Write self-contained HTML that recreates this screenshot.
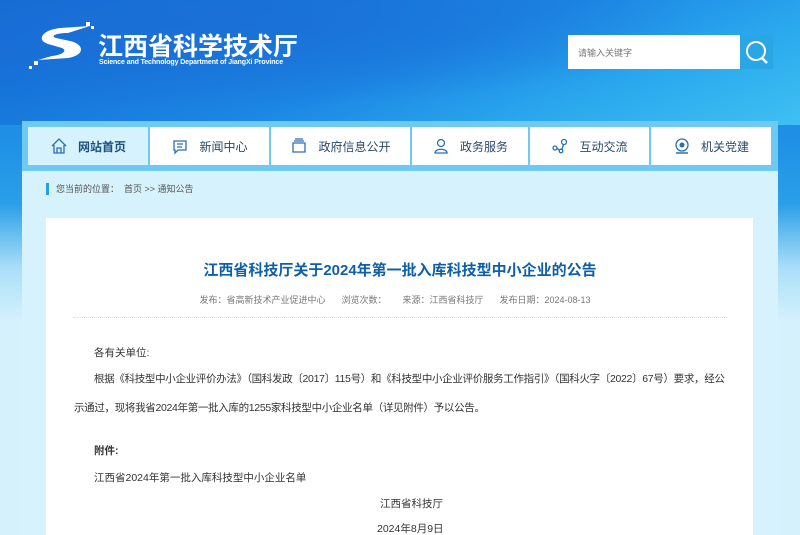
<!DOCTYPE html>
<html><head><meta charset="utf-8"><style>
*{margin:0;padding:0;box-sizing:border-box}
html,body{width:800px;height:535px;overflow:hidden}
body{position:relative;font-family:"Liberation Sans","Noto Sans CJK SC",sans-serif;background:linear-gradient(180deg,#1a78d8 0%,#1f8fe6 25%,#2a9fe8 38%,#a9def8 50%,#d5f1fc 60%,#d5f1fc 100%)}
.hdr{position:absolute;left:0;top:0;width:800px;height:125px;background:radial-gradient(ellipse at 20% 20%,#1a6fd6 0%,transparent 60%),linear-gradient(160deg,#1267d2 0%,#1c86e4 50%,#2aa8ee 75%,#3fc0f2 100%)}
.logo{position:absolute;left:98px;top:27px;color:#fff;font-size:25px;font-weight:bold;letter-spacing:0}
.en{position:absolute;left:99px;top:59px;color:#fff;font-size:7px;font-weight:bold;letter-spacing:-0.1px}
.search{position:absolute;left:568px;top:35px;width:172px;height:34px;background:#fff;font-size:9px;color:#777;padding:11px 0 0 10px}
.sbtn{position:absolute;left:740px;top:35px;width:33px;height:34px;background:#2aa6e4}
.panel{position:absolute;left:22px;top:121px;width:756px;height:420px;background:#d6f2fc}
.navbg{position:absolute;left:22px;top:121px;width:756px;height:50px;background:#6fcaf3}
.nav{position:absolute;left:28px;top:127px;height:38px;display:flex;gap:2px}
.nav div{background:#fff;display:flex;align-items:center;justify-content:center;font-size:12px;color:#2a4a6a;gap:10px}
.nav div.on{background:#d6f2fc;font-weight:bold;color:#1b4f82}
.nav svg{width:18px;height:18px}
.bc{position:absolute;left:46px;top:183px;font-size:9px;color:#555;border-left:3px solid #2a9fe0;padding-left:7px;height:12px;line-height:12px}
.card{position:absolute;left:46px;top:218px;width:707px;height:330px;background:#fff}
h1{position:absolute;left:0;width:800px;top:259px;text-align:center;font-size:15px;color:#0f5fa8;font-weight:bold}
.meta{position:absolute;top:293px;left:0;width:790px;text-align:center;font-size:9px;color:#777}
.meta span{margin:0 8px}
.line{position:absolute;left:73px;top:317px;width:654px;border-top:1px dotted #ddd}
.p{position:absolute;font-size:10.5px;color:#333}
</style></head><body>
<div class="hdr"></div>
<svg style="position:absolute;left:28px;top:22px" width="70" height="50" viewBox="0 0 70 50"><path d="M62 4 L32 6 C14 8 8 18 20 22 L34 26 C40 29 34 33 24 34 L10 38 L40 36 C58 33 56 22 42 19 L28 16 C22 14 28 11 40 11 Z" fill="#fff"/><rect x="58" y="0" width="4" height="4" fill="#fff"/><rect x="63" y="4" width="3" height="3" fill="#fff"/><rect x="6" y="39" width="4" height="4" fill="#fff"/><rect x="1" y="44" width="3" height="3" fill="#fff"/></svg>
<div class="logo">江西省科学技术厅</div>
<div class="en">Science and Technology Department of JiangXi Province</div>
<div class="search">请输入关键字</div>
<div class="sbtn"><svg width="33" height="34"><circle cx="16" cy="16" r="9" fill="none" stroke="#fff" stroke-width="2"/><path d="M22 23 L27 28" stroke="#fff" stroke-width="2.5"/></svg></div>
<div class="panel"></div>
<div class="navbg"></div>
<div class="nav">
<div class="on" style="width:120px"><svg viewBox="0 0 18 18"><path d="M2 9 L9 2 L16 9 M4 8 V16 H14 V8 M7 16 V11 H11 V16" fill="none" stroke="#2a6fb0" stroke-width="1.3"/></svg>网站首页</div>
<div style="width:119px"><svg viewBox="0 0 18 18"><path d="M3 4 H15 V13 H7 L4 16 V13 H3 Z M6 7 H12 M6 10 H11" fill="none" stroke="#2a6fb0" stroke-width="1.3"/></svg>新闻中心</div>
<div style="width:139px"><svg viewBox="0 0 18 18"><path d="M3 6 H15 V15 H3 Z M4 4 H14 M5 2 H13" fill="none" stroke="#2a6fb0" stroke-width="1.3"/></svg>政府信息公开</div>
<div style="width:116px"><svg viewBox="0 0 18 18"><circle cx="9" cy="6" r="3.5" fill="none" stroke="#2a6fb0" stroke-width="1.3"/><path d="M3 16 C3 11 15 11 15 16 Z" fill="none" stroke="#2a6fb0" stroke-width="1.3"/></svg>政务服务</div>
<div style="width:119px"><svg viewBox="0 0 18 18"><circle cx="4" cy="11" r="2" fill="none" stroke="#2a6fb0" stroke-width="1.3"/><circle cx="13" cy="5" r="2.5" fill="none" stroke="#2a6fb0" stroke-width="1.3"/><circle cx="10" cy="14" r="1.8" fill="none" stroke="#2a6fb0" stroke-width="1.3"/><path d="M6 11 L8 13 M11 12 L12.5 7.5" stroke="#2a6fb0" stroke-width="1.3"/></svg>互动交流</div>
<div style="width:120px"><svg viewBox="0 0 18 18"><circle cx="9" cy="8" r="6" fill="none" stroke="#2a6fb0" stroke-width="1.3"/><circle cx="9" cy="8" r="2.5" fill="#2a6fb0"/><path d="M3 16 H15" stroke="#2a6fb0" stroke-width="1.5"/></svg>机关党建</div>
</div>
<div class="bc">您当前的位置：&nbsp; 首页 &gt;&gt; 通知公告</div>
<div class="card"></div>
<h1>江西省科技厅关于2024年第一批入库科技型中小企业的公告</h1>
<div class="meta"><span>发布：省高新技术产业促进中心</span><span>浏览次数：</span><span>来源：江西省科技厅</span><span>发布日期：2024-08-13</span></div>
<div class="line"></div>
<div class="p" style="left:94px;top:345px">各有关单位:</div>
<div class="p" style="left:74px;top:365px;width:656px;text-indent:20px;line-height:29px;letter-spacing:-0.32px">根据《科技型中小企业评价办法》（国科发政〔2017〕115号）和《科技型中小企业评价服务工作指引》（国科火字〔2022〕67号）要求，经公示通过，现将我省2024年第一批入库的1255家科技型中小企业名单（详见附件）予以公告。</div>
<div class="p" style="left:94px;top:443px;font-weight:bold">附件:</div>
<div class="p" style="left:94px;top:470px">江西省2024年第一批入库科技型中小企业名单</div>
<div class="p" style="left:380px;top:496px">江西省科技厅</div>
<div class="p" style="left:377px;top:521px">2024年8月9日</div>
</body></html>
